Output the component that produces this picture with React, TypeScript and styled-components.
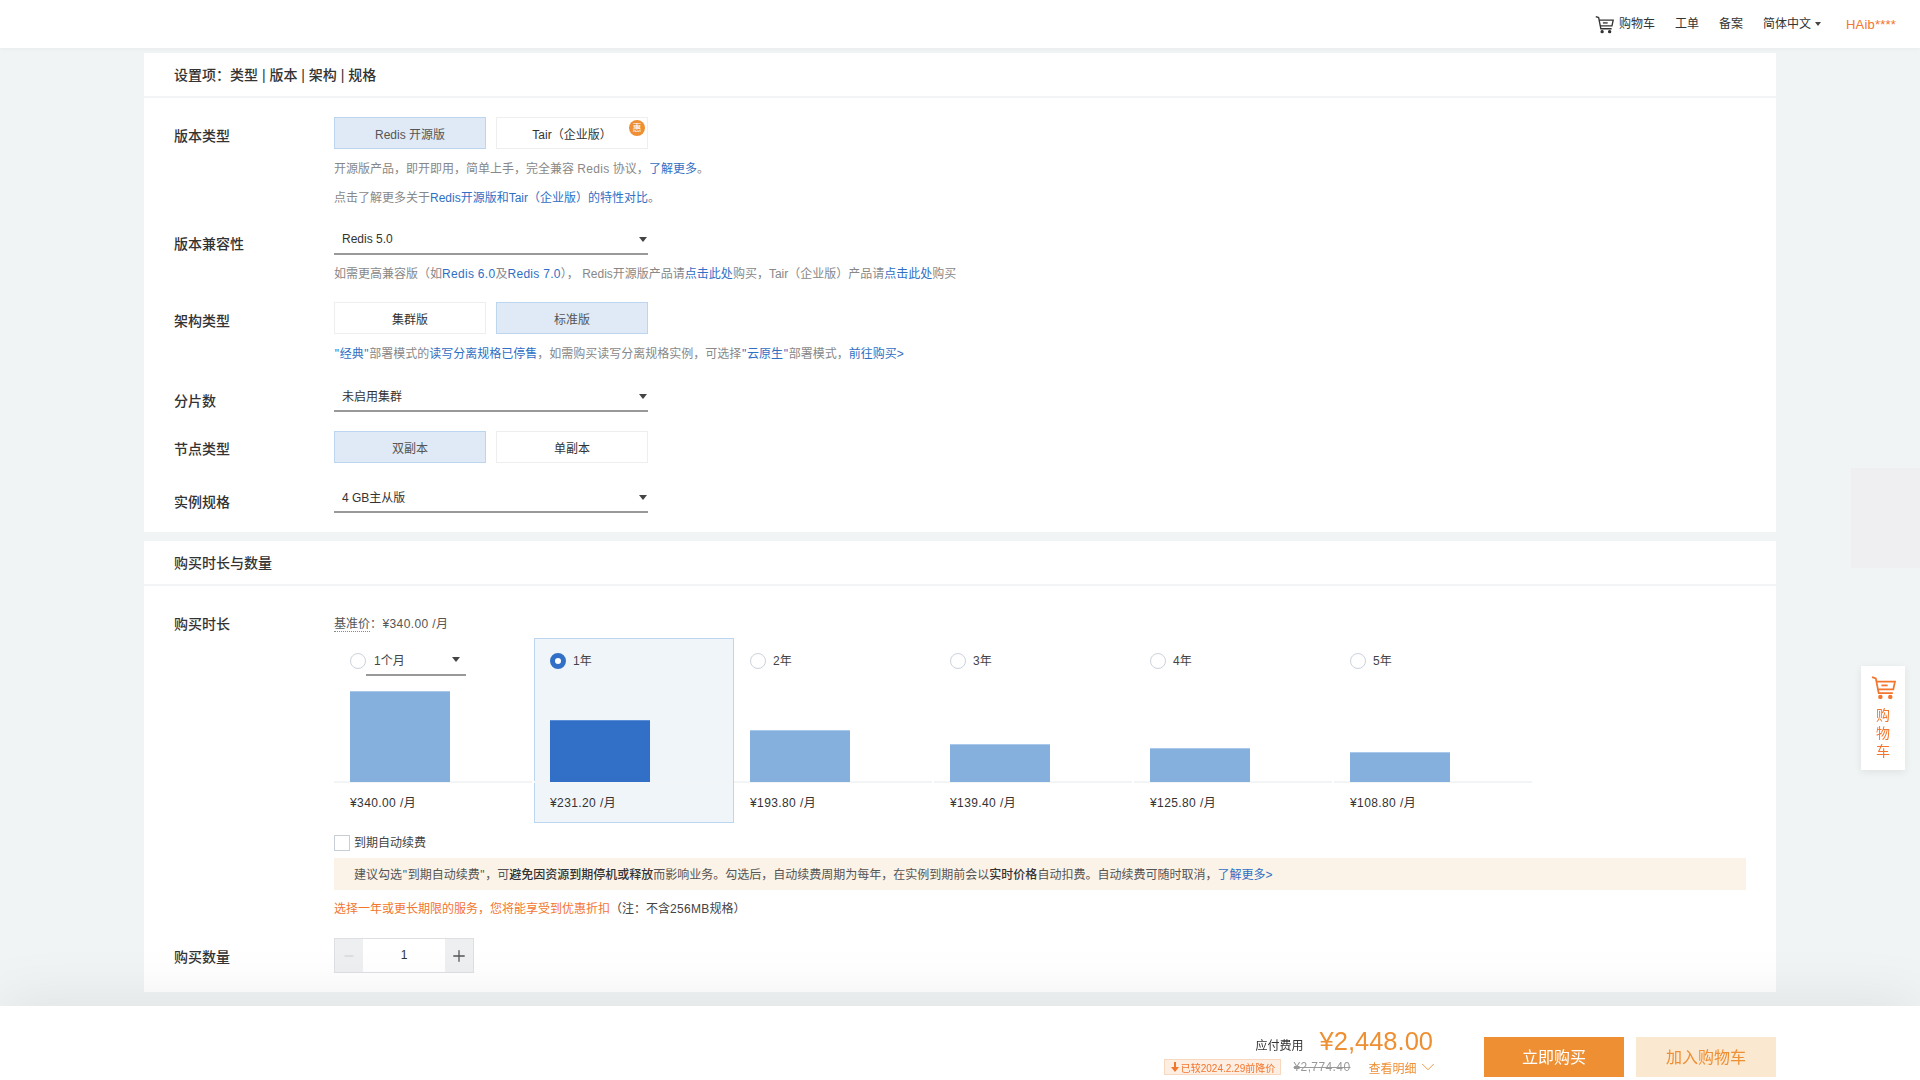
import { ChevronDown, Minus, Plus } from "lucide-react";
import styled, { createGlobalStyle } from "styled-components";

// colors
const link = "#2f6fc4";
const orange = "#ee8f33";
const orangeRed = "#f2762e";
const muted = "#888888";
const text = "#333333";

const durations = [
  { key: "1m", name: "1个月", price: "¥340.00 /月", height: 91 },
  { key: "1y", name: "1年", price: "¥231.20 /月", height: 62 },
  { key: "2y", name: "2年", price: "¥193.80 /月", height: 52 },
  { key: "3y", name: "3年", price: "¥139.40 /月", height: 38 },
  { key: "4y", name: "4年", price: "¥125.80 /月", height: 34 },
  { key: "5y", name: "5年", price: "¥108.80 /月", height: 30 },
];

const CartIcon = ({ size, color }: { size: number; color: string }) => (
  <svg
    width={size}
    height={size}
    viewBox="0 0 24 24"
    fill="none"
    stroke={color}
    strokeWidth="1.7"
  >
    <path d="M1 2l3.6 1.2L7.4 17.4H21" />
    <path d="M5.2 6.4H23l-1.6 7.4H6.6" />
    <path d="M10 10h6" />
    <circle cx="9" cy="21" r="1.3" fill={color} />
    <circle cx="18.5" cy="21" r="1.3" fill={color} />
  </svg>
);

const App = () => {
  return (
    <>
      <GlobalStyle />
      <Header>
        <CartLink>
          <CartIcon size={19} color="#333333" />
          购物车
        </CartLink>
        <HeaderLink>工单</HeaderLink>
        <HeaderLink>备案</HeaderLink>
        <HeaderLink>
          简体中文
          <Caret $small />
        </HeaderLink>
        <UserName>HAib****</UserName>
      </Header>

      <Main>
        <Panel>
          <PanelTitle>设置项：类型 | 版本 | 架构 | 规格</PanelTitle>
          <PanelBody $top={19} $bottom={19}>
            <Row>
              <Label>版本类型</Label>
              <Content>
                <ButtonRow>
                  <OptionButton $active>Redis 开源版</OptionButton>
                  <OptionButton>
                    Tair（企业版）
                    <Badge>惠</Badge>
                  </OptionButton>
                </ButtonRow>
                <Help>
                  开源版产品，即开即用，简单上手，完全兼容 <Wide>Redis</Wide> 协议，
                  <A>了解更多</A>。
                </Help>
                <Help>
                  点击了解更多关于<A>Redis开源版和Tair（企业版）的特性对比</A>。
                </Help>
              </Content>
            </Row>

            <Row $mt={18}>
              <Label>版本兼容性</Label>
              <Content>
                <Select $pb={0}>
                  Redis 5.0
                  <Caret />
                </Select>
                <Help $mt={8}>
                  如需更高兼容版（如
                  <A>
                    <Wide>Redis 6.0</Wide>
                  </A>
                  及
                  <A>
                    <Wide>Redis 7.0</Wide>
                  </A>
                  ）， Redis开源版产品请<A>点击此处</A>购买，Tair（企业版）产品请
                  <A>点击此处</A>购买
                </Help>
              </Content>
            </Row>

            <Row $mt={19}>
              <Label>架构类型</Label>
              <Content>
                <ButtonRow>
                  <OptionButton>集群版</OptionButton>
                  <OptionButton $active>标准版</OptionButton>
                </ButtonRow>
                <Help>
                  <A>
                    <Quote>"</Quote>经典<Quote>"</Quote>
                  </A>
                  部署模式的<A>读写分离规格已停售</A>
                  ，如需购买读写分离规格实例，可选择
                  <A>
                    <Quote>"</Quote>云原生<Quote>"</Quote>
                  </A>
                  部署模式，
                  <A>前往购买&gt;</A>
                </Help>
              </Content>
            </Row>

            <Row $mt={19}>
              <Label>分片数</Label>
              <Content>
                <Select>
                  未启用集群
                  <Caret />
                </Select>
              </Content>
            </Row>

            <Row $mt={19}>
              <Label $top={8}>节点类型</Label>
              <Content>
                <ButtonRow>
                  <OptionButton $active>双副本</OptionButton>
                  <OptionButton>单副本</OptionButton>
                </ButtonRow>
              </Content>
            </Row>

            <Row $mt={20}>
              <Label>实例规格</Label>
              <Content>
                <Select>
                  4 GB主从版
                  <Caret />
                </Select>
              </Content>
            </Row>
          </PanelBody>
        </Panel>

        <Panel>
          <PanelTitle>购买时长与数量</PanelTitle>
          <PanelBody $top={27} $bottom={19}>
            <Row>
              <Label $top={1}>购买时长</Label>
              <Content>
                <BasePrice>
                  <Dotted>基准价</Dotted>：¥340.00 /月
                </BasePrice>
                <DurationGrid>
                  {durations.map((d, i) => (
                    <DurationCell key={d.key} $selected={i === 1}>
                      <RadioRow>
                        <Radio $checked={i === 1} />
                        {i === 0 ? (
                          <MonthSelect>
                            {d.name}
                            <Caret />
                          </MonthSelect>
                        ) : (
                          <RadioName>{d.name}</RadioName>
                        )}
                      </RadioRow>
                      <BarArea>
                        <Bar
                          $selected={i === 1}
                          style={{ height: d.height }}
                        />
                      </BarArea>
                      <Price>{d.price}</Price>
                    </DurationCell>
                  ))}
                </DurationGrid>
                <CheckRow>
                  <Checkbox />
                  <CheckText>到期自动续费</CheckText>
                </CheckRow>
                <Notice>
                  建议勾选<Quote>"</Quote>到期自动续费<Quote>"</Quote>，可
                  <b>避免因资源到期停机或释放</b>
                  而影响业务。勾选后，自动续费周期为每年，在实例到期前会以
                  <b>实时价格</b>自动扣费。自动续费可随时取消，
                  <A>了解更多&gt;</A>
                </Notice>
                <Discount>
                  <DiscountStrong>
                    选择一年或更长期限的服务，您将能享受到优惠折扣
                  </DiscountStrong>
                  （注：不含<Wide>256MB</Wide>规格）
                </Discount>
              </Content>
            </Row>

            <Row $mt={19}>
              <Label>购买数量</Label>
              <Content>
                <Stepper>
                  <StepButton $disabled>
                    <Minus size={14} strokeWidth={1.5} />
                  </StepButton>
                  <StepValue>1</StepValue>
                  <StepButton>
                    <Plus size={18} strokeWidth={1.7} />
                  </StepButton>
                </Stepper>
              </Content>
            </Row>
          </PanelBody>
        </Panel>
      </Main>

      <SideGhost />
      <SideCart>
        <CartIcon size={25} color={orangeRed} />
        <SideCartText>
          购<br />物<br />车
        </SideCartText>
      </SideCart>

      <Footer>
        <PriceBlock>
          <PriceLine>
            <PriceLabel>应付费用</PriceLabel>
            <TotalPrice>¥2,448.00</TotalPrice>
          </PriceLine>
          <PriceMeta>
            <DropBadge>
              <svg width="8" height="10" viewBox="0 0 8 10" fill={orangeRed}>
                <path d="M3 0h2v5h3L4 10 0 5h3z" />
              </svg>
              已较2024.2.29前降价
            </DropBadge>
            <OldPrice>¥2,774.40</OldPrice>
            <Details>
              查看明细
              <DetailsChevron size={22} strokeWidth={1} />
            </Details>
          </PriceMeta>
        </PriceBlock>
        <BuyButton>立即购买</BuyButton>
        <CartButton>加入购物车</CartButton>
      </Footer>
    </>
  );
};

const GlobalStyle = createGlobalStyle`
  html, body {
    margin: 0;
    padding: 0;
    background: #f0f4f5;
    color: ${text};
    font-family: "Liberation Sans", "Noto Sans CJK SC", sans-serif;
    font-size: 12px;
  }
`;

const Header = styled.header`
  height: 48px;
  background: #ffffff;
  box-shadow: 0 1px 4px rgba(0, 0, 0, 0.04);
  display: flex;
  align-items: center;
  justify-content: flex-end;
  gap: 20px;
  padding-right: 24px;
`;

const HeaderLink = styled.div`
  display: flex;
  align-items: center;
  gap: 4px;
  line-height: 20px;
  color: ${text};
`;

const CartLink = styled(HeaderLink)`
  gap: 5px;
`;

const UserName = styled.div`
  color: ${orangeRed};
  margin-left: 5px;
  font-size: 13px;
  letter-spacing: 0.2px;
`;

const Caret = styled.i<{ $small?: boolean }>`
  display: block;
  width: 0;
  height: 0;
  border-style: solid;
  border-color: #444444 transparent transparent;
  border-width: ${(p) => (p.$small ? "4px 3px 0" : "5px 4px 0")};
`;

const Main = styled.main`
  width: 1632px;
  margin: 0 auto;
  padding-top: 5px;
  display: flex;
  flex-direction: column;
  gap: 9px;
`;

const Panel = styled.section`
  background: #ffffff;
`;

const PanelTitle = styled.h2`
  margin: 0;
  height: 45px;
  box-sizing: border-box;
  padding: 0 30px;
  border-bottom: 2px solid #f3f4f6;
  font-size: 14px;
  font-weight: 500;
  line-height: 45px;
  color: ${text};
`;

const PanelBody = styled.div<{ $top: number; $bottom: number }>`
  padding: ${(p) => p.$top}px 30px ${(p) => p.$bottom}px;
`;

const Row = styled.div<{ $mt?: number }>`
  display: flex;
  margin-top: ${(p) => p.$mt ?? 0}px;
`;

const Label = styled.div<{ $top?: number }>`
  width: 160px;
  flex: none;
  padding-top: ${(p) => p.$top ?? 9}px;
  font-size: 14px;
  font-weight: 500;
  line-height: 20px;
  color: ${text};
`;

const Content = styled.div`
  flex: 1;
  min-width: 0;
`;

const ButtonRow = styled.div`
  display: flex;
  gap: 10px;
`;

const OptionButton = styled.button<{ $active?: boolean }>`
  position: relative;
  width: 152px;
  height: 32px;
  padding: 0;
  font: inherit;
  cursor: pointer;
  background: ${(p) => (p.$active ? "#dfeaf6" : "#ffffff")};
  border: 1px solid ${(p) => (p.$active ? "#bcd6f0" : "#eeeeee")};
  color: ${(p) => (p.$active ? "#555555" : text)};
`;

const Badge = styled.span`
  position: absolute;
  top: 2px;
  right: 2px;
  width: 16px;
  height: 16px;
  border-radius: 50%;
  background: ${orange};
  color: #ffffff;
  font-size: 9px;
  line-height: 16px;
  text-align: center;
`;

const Help = styled.p<{ $mt?: number }>`
  margin: ${(p) => p.$mt ?? 9}px 0 -1px;
  padding-top: 1px;
  line-height: 20px;
  color: ${muted};
`;

const A = styled.a`
  color: ${link};
  cursor: pointer;
`;

const Wide = styled.span`
  letter-spacing: 0.3px;
`;

const Quote = styled.span`
  padding: 0 0.7px;
`;

const Select = styled.div<{ $pb?: number }>`
  width: 314px;
  height: 30px;
  box-sizing: border-box;
  padding: 0 1px ${(p) => p.$pb ?? 2}px 8px;
  display: flex;
  align-items: center;
  justify-content: space-between;
  border-bottom: 2px solid #999999;
  color: ${text};

  ${Caret} {
    margin-top: ${(p) => (p.$pb === 0 ? 1 : 3)}px;
  }
`;

const BasePrice = styled.div`
  padding-top: 1px;
  line-height: 20px;
  letter-spacing: 0.4px;
  color: #555555;
`;

const Dotted = styled.span`
  letter-spacing: 0;
  border-bottom: 1px dotted #888888;
`;

const DurationGrid = styled.div`
  display: flex;
  margin-top: 4px;
`;

const DurationCell = styled.div<{ $selected: boolean }>`
  width: 200px;
  height: 185px;
  box-sizing: border-box;
  padding-top: 14px;
  border: 1px solid ${(p) => (p.$selected ? "#bcd6f0" : "transparent")};
  background: ${(p) => (p.$selected ? "#f0f5fa" : "transparent")};
`;

const RadioRow = styled.div`
  height: 23px;
  padding-left: 15px;
  display: flex;
  align-items: flex-start;
`;

const Radio = styled.i<{ $checked: boolean }>`
  display: block;
  width: 16px;
  height: 16px;
  box-sizing: border-box;
  border-radius: 50%;
  flex: none;
  background: #ffffff;
  border: ${(p) => (p.$checked ? "5px solid #3270c8" : "1px solid #ccd2dc")};
`;

const RadioName = styled.span`
  margin-left: 7px;
  line-height: 16px;
  color: #444444;
`;

const MonthSelect = styled.div`
  width: 100px;
  height: 23px;
  box-sizing: border-box;
  padding: 0 6px 8px 8px;
  display: flex;
  align-items: center;
  justify-content: space-between;
  border-bottom: 2px solid #999999;
  color: #444444;
`;

const BarArea = styled.div`
  height: 105px;
  padding-left: 16px;
  margin: 0 1px 0 -1px;
  display: flex;
  align-items: flex-end;
  border-bottom: 2px solid #f3f4f5;
`;

const Bar = styled.div<{ $selected: boolean }>`
  width: 100px;
  box-sizing: border-box;
  margin-bottom: -1px;
  border-top: 1px solid ${(p) => (p.$selected ? "#5a8ed6" : "#a9c8ea")};
  background: ${(p) => (p.$selected ? "#3270c8" : "#85b0de")};
`;

const Price = styled.div`
  margin-top: 10px;
  padding-left: 15px;
  line-height: 20px;
  letter-spacing: 0.4px;
  color: ${text};
`;

const CheckRow = styled.label`
  display: flex;
  align-items: center;
  gap: 4px;
  margin-top: 12px;
  height: 16px;
  color: #444444;
`;

const CheckText = styled.span`
  margin-top: -3px;
`;

const Checkbox = styled.i`
  display: block;
  width: 16px;
  height: 16px;
  box-sizing: border-box;
  background: #ffffff;
  border: 1px solid #c8ced6;
`;

const Notice = styled.div`
  margin-top: 7px;
  height: 32px;
  padding-left: 20px;
  background: #fbf3e7;
  line-height: 34px;
  color: #555555;

  b {
    font-weight: 500;
    color: #333333;
  }
`;

const Discount = styled.div`
  margin-top: 9px;
  line-height: 20px;
  color: #444444;
`;

const DiscountStrong = styled.span`
  color: ${orangeRed};
`;

const Stepper = styled.div`
  width: 140px;
  height: 35px;
  box-sizing: border-box;
  display: flex;
  border: 1px solid #dddfe3;
`;

const StepButton = styled.div<{ $disabled?: boolean }>`
  width: 28px;
  display: flex;
  align-items: center;
  justify-content: center;
  background: #eeeff1;
  color: ${(p) => (p.$disabled ? "#c8c8c8" : "#555555")};
`;

const StepValue = styled.div`
  flex: 1;
  text-align: center;
  line-height: 33px;
  color: ${text};
`;

const SideGhost = styled.div`
  position: fixed;
  top: 468px;
  right: 0;
  width: 69px;
  height: 100px;
  background: #efeff1;
`;

const SideCart = styled.aside`
  position: fixed;
  top: 666px;
  right: 15px;
  width: 44px;
  height: 104px;
  box-sizing: border-box;
  padding-top: 9px;
  display: flex;
  flex-direction: column;
  align-items: center;
  background: #ffffff;
  box-shadow: 0 2px 8px rgba(0, 0, 0, 0.08);
`;

const SideCartText = styled.div`
  margin-top: 6px;
  font-size: 14px;
  line-height: 18px;
  text-align: center;
  color: ${orangeRed};
`;

const Footer = styled.footer`
  position: fixed;
  left: 0;
  right: 0;
  bottom: 0;
  height: 74px;
  box-sizing: border-box;
  padding: 20px 144px 0 0;
  display: flex;
  justify-content: flex-end;
  align-items: flex-start;
  background: #ffffff;
  box-shadow: 0 -5px 60px rgba(0, 0, 0, 0.08);
`;

const PriceBlock = styled.div`
  margin-right: 51px;
  display: flex;
  flex-direction: column;
  align-items: flex-end;
`;

const PriceLine = styled.div`
  height: 30px;
  display: flex;
  align-items: baseline;
  gap: 16px;
`;

const PriceLabel = styled.span`
  color: ${text};
`;

const TotalPrice = styled.span`
  font-size: 25.5px;
  line-height: 30px;
  color: ${orange};
`;

const PriceMeta = styled.div`
  margin-top: 3px;
  height: 16px;
  display: flex;
  align-items: center;
`;

const DropBadge = styled.span`
  width: 117px;
  height: 16px;
  box-sizing: border-box;
  display: flex;
  align-items: center;
  justify-content: center;
  gap: 2px;
  border: 1px solid #f8d9bf;
  background: #fdeee3;
  font-size: 10px;
  color: ${orangeRed};
`;

const OldPrice = styled.span`
  margin-left: 12px;
  letter-spacing: 0.4px;
  color: #999999;
  text-decoration: line-through;
`;

const Details = styled.span`
  margin-left: 18px;
  display: flex;
  align-items: center;
  color: ${orange};
`;

const DetailsChevron = styled(ChevronDown)`
  margin-right: -5.5px;
`;

const BuyButton = styled.button`
  width: 140px;
  height: 40px;
  margin-top: 11px;
  padding: 0 0 2px;
  border: none;
  background: ${orange};
  color: #ffffff;
  font: inherit;
  font-size: 16px;
  cursor: pointer;
`;

const CartButton = styled(BuyButton)`
  margin-left: 12px;
  background: #fbe8d0;
  color: ${orange};
`;

export default App;
